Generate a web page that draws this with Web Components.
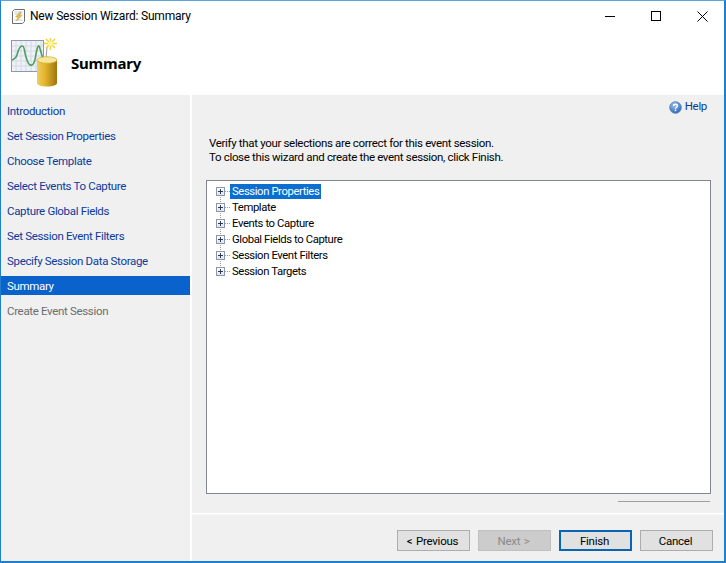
<!DOCTYPE html>
<html><head><meta charset="utf-8"><style>
html,body{margin:0;padding:0;width:726px;height:563px;overflow:hidden;background:#fff}
body{font:11.5px Roboto,sans-serif;letter-spacing:-.33px}
</style></head><body>
<template id="t-window"><style>
:host{display:flex;flex-direction:column;box-sizing:border-box;width:726px;height:563px;border:solid #1f7fce;border-width:1px 2px 2px 1px;border-top-color:#5aa5dc;background:#fff;color:#000}
.main{flex:1;display:flex;min-height:0}
.side{width:189px;background:#f0f0f0;flex:none}
.content{margin-left:2px;flex:1;min-width:0;display:flex;flex-direction:column;background:#f0f0f0}
</style><slot name="title"></slot><slot name="banner"></slot><div class="main"><div class="side"><slot name="nav"></slot></div><div class="content"><slot></slot></div></div></template>

<template id="t-title"><style>
:host{display:flex;align-items:center;height:30px;flex:none;padding-left:9px}
svg{display:block;flex:none}
.t{margin-left:4px;font-size:12px;letter-spacing:-.19px;flex:1}
.c{display:flex;align-self:stretch;margin-right:-1px}
.b{width:46px;display:flex;align-items:center;justify-content:center}
</style><svg width="16" height="16" viewBox="0 0 16 16"><path d="M2.500 3.500l2-2h10v12l-2 2h-10z" fill="#fff" stroke="#6e6e6e"/><path d="M4.500 4h8M4.500 6h8M4.500 12h8" stroke="#c3cfdc"/><path d="M10 4L5.500 9H8l-1.500 4L12 7.500H9.500L11 4z" fill="#ecc03a" stroke="#b08a20" stroke-width=".4"/></svg><span class="t"><slot></slot></span>
<div class="c"><div class="b"><svg width="10" height="10"><path d="M0 5.500h10" stroke="#000"/></svg></div><div class="b"><svg width="10" height="10"><rect x=".5" y=".5" width="9" height="9" fill="none" stroke="#000"/></svg></div><div class="b"><svg width="11" height="11"><path d="M.5.500l10 10M10.500.500l-10 10" stroke="#000"/></svg></div></div></template>

<template id="t-banner"><style>
:host{display:flex;align-items:center;height:64px;flex:none;background:#fff;padding-left:8px;box-sizing:border-box}
svg{display:block;flex:none;margin-top:-1px}
.h{margin-left:12px;font:bold 15px "Noto Sans",sans-serif;letter-spacing:-.2px;margin-top:-1px}
</style><svg width="50" height="50" viewBox="0 0 50 50"><defs>
<linearGradient id="cy" x1="0" x2="1" y1="0" y2="0"><stop offset="0" stop-color="#edcf60"/><stop offset=".4" stop-color="#e3b42e"/><stop offset="1" stop-color="#a0740f"/></linearGradient></defs>
<rect x="2.500" y="2.500" width="32" height="31" fill="#eef1f6" stroke="#8d97ad"/>
<path d="M7 3v30M12 3v30M17 3v30M22 3v30M27 3v30M32 3v30M3 8h31M3 13h31M3 18h31M3 23h31M3 28h31" stroke="#cdd4e2" stroke-width=".8"/>
<path d="M3 22c2-1 4-1 5-5 1-3 2-9 5-9s2 5 4 11 3 9 6 8 3-6 4-11 2-9 3-8 2 8 5 15" fill="none" stroke="#4e9e61" stroke-width="1.600"/>
<path d="M38 9l-1 12" stroke="#9b9b9b"/>
<g stroke="#f2d43e" stroke-width="1.600"><path d="M41.500 -1v13M35 5.500h13M37 1l9 9M46 1l-9 9"/></g><circle cx="41.500" cy="5.500" r="2.600" fill="#fff3a8"/>
<path d="M28 22v23c0 2.200 4 3.500 10 3.500s10-1.300 10-3.500V22z" fill="url(#cy)"/>
<ellipse cx="38" cy="22" rx="10" ry="3.300" fill="#f6e79c" stroke="#d4a827" stroke-width=".7"/></svg><div class="h"><slot></slot></div></template>

<template id="t-nav"><style>
:host{display:block;padding-top:6px}
</style><slot></slot></template>

<template id="t-nav-item"><style>
:host{display:block;height:19px;line-height:20px;margin-bottom:6px;padding-left:6px;color:#0b3a9c;white-space:nowrap}
:host([active]){background:#0a62cc;color:#fff}
:host([disabled]){color:#6d6d6d}
</style><slot></slot></template>

<template id="t-help"><style>
:host{display:flex;justify-content:flex-end;align-items:center;gap:3px;height:22px;padding-right:17px;color:#0b3a9c;flex:none}
svg{display:block;position:relative;top:1px}
</style><svg width="13" height="13" viewBox="0 0 14 14"><defs><radialGradient id="hb" cx=".4" cy=".3" r=".8"><stop offset="0" stop-color="#9cc4f0"/><stop offset="1" stop-color="#1f59b0"/></radialGradient></defs><circle cx="7" cy="7" r="6.300" fill="url(#hb)" stroke="#6a8cc0"/><path d="M5 5.300C5 4.200 6 3.500 7 3.500s2.100.7 2.100 1.800C9.100 6.800 7 6.700 7 8.300" fill="none" stroke="#fff" stroke-width="1.500"/><rect x="6.200" y="9.300" width="1.600" height="1.600" fill="#fff"/></svg><slot></slot></template>

<template id="t-body"><style>
:host{display:flex;flex-direction:column;flex:1;min-height:0;padding:18px 13px 0 14px}
.intro{line-height:14px;height:44px;flex:none;padding-left:3px;margin-top:1px}
.box{flex:1;min-height:0;background:#fff;border:1px solid #828790;padding:2px 0 0 9px}
.rule{flex:none;height:1px;background:#a0a0a0;width:92px;align-self:flex-end;margin:7px 1px 0 0}
.gap{height:11px;flex:none}
</style><div class="intro"><slot name="intro"></slot></div><div class="box"><slot></slot></div><div class="rule"></div><div class="gap"></div></template>

<template id="t-tree-item"><style>
:host{display:flex;align-items:center;height:16px;position:relative;white-space:nowrap;font-size:11.3px;letter-spacing:-.4px}
.exp{width:9px;height:9px;box-sizing:border-box;border:1px solid #8c96a8;background:linear-gradient(#fff,#dfe3ec);position:relative;flex:none;z-index:1}
.exp::before{content:"";position:absolute;left:1px;right:1px;top:3px;height:1px;background:#2d3a55}
.exp::after{content:"";position:absolute;top:1px;bottom:1px;left:3px;width:1px;background:#2d3a55}
.dash{width:5px;height:0;border-top:1px dotted #999;flex:none}
.v{position:absolute;left:4px;top:12px;height:9px;border-left:1px dotted #999}
:host([last]) .v{display:none}
.label{padding:0 2px;height:15px;line-height:15px}
:host([selected]) .label{background:#0a6fd0;color:#fff}
</style><span class="exp"></span><span class="dash"></span><span class="label"><slot></slot></span><span class="v"></span></template>

<template id="t-footer"><style>
:host{display:flex;justify-content:flex-end;gap:8px;flex:none;height:48px;box-sizing:border-box;border-top:1px solid #fff;box-shadow:inset 0 1px 0 #f7f7f7;padding:16px 11px 0 0}
</style><slot></slot></template>

<template id="t-btn"><style>
:host{display:flex;align-items:center;justify-content:center;box-sizing:border-box;width:73px;height:21px;background:#e1e1e1;border:1px solid #adadad;white-space:nowrap;padding-right:2px;word-spacing:1px;letter-spacing:-.25px}
:host([default]){border:2px solid #0a64b4}
:host([disabled]){background:#ccc;border-color:#bfbfbf;color:#8a8a8a}
</style><slot></slot></template>

<wiz-window>
<wiz-title slot="title">New Session Wizard: Summary</wiz-title>
<wiz-banner slot="banner">Summary</wiz-banner>
<wiz-nav slot="nav">
<wiz-nav-item>Introduction</wiz-nav-item>
<wiz-nav-item>Set Session Properties</wiz-nav-item>
<wiz-nav-item>Choose Template</wiz-nav-item>
<wiz-nav-item>Select Events To Capture</wiz-nav-item>
<wiz-nav-item>Capture Global Fields</wiz-nav-item>
<wiz-nav-item>Set Session Event Filters</wiz-nav-item>
<wiz-nav-item>Specify Session Data Storage</wiz-nav-item>
<wiz-nav-item active>Summary</wiz-nav-item>
<wiz-nav-item disabled>Create Event Session</wiz-nav-item>
</wiz-nav>
<wiz-help>Help</wiz-help>
<wiz-body>
<span slot="intro">Verify that your selections are correct for this event session.<br>To close this wizard and create the event session, click Finish.</span>
<wiz-tree-item selected>Session Properties</wiz-tree-item>
<wiz-tree-item>Template</wiz-tree-item>
<wiz-tree-item>Events to Capture</wiz-tree-item>
<wiz-tree-item>Global Fields to Capture</wiz-tree-item>
<wiz-tree-item>Session Event Filters</wiz-tree-item>
<wiz-tree-item last>Session Targets</wiz-tree-item>
</wiz-body>
<wiz-footer>
<wiz-btn>&lt; Previous</wiz-btn>
<wiz-btn disabled>Next &gt;</wiz-btn>
<wiz-btn default>Finish</wiz-btn>
<wiz-btn>Cancel</wiz-btn>
</wiz-footer>
</wiz-window>
<script>
for(const n of ['window','title','banner','nav','nav-item','help','body','tree-item','footer','btn']){
  customElements.define('wiz-'+n,class extends HTMLElement{
    constructor(){super();this.attachShadow({mode:'open'}).appendChild(document.getElementById('t-'+n).content.cloneNode(true));}
  });
}
</script>
</body></html>
